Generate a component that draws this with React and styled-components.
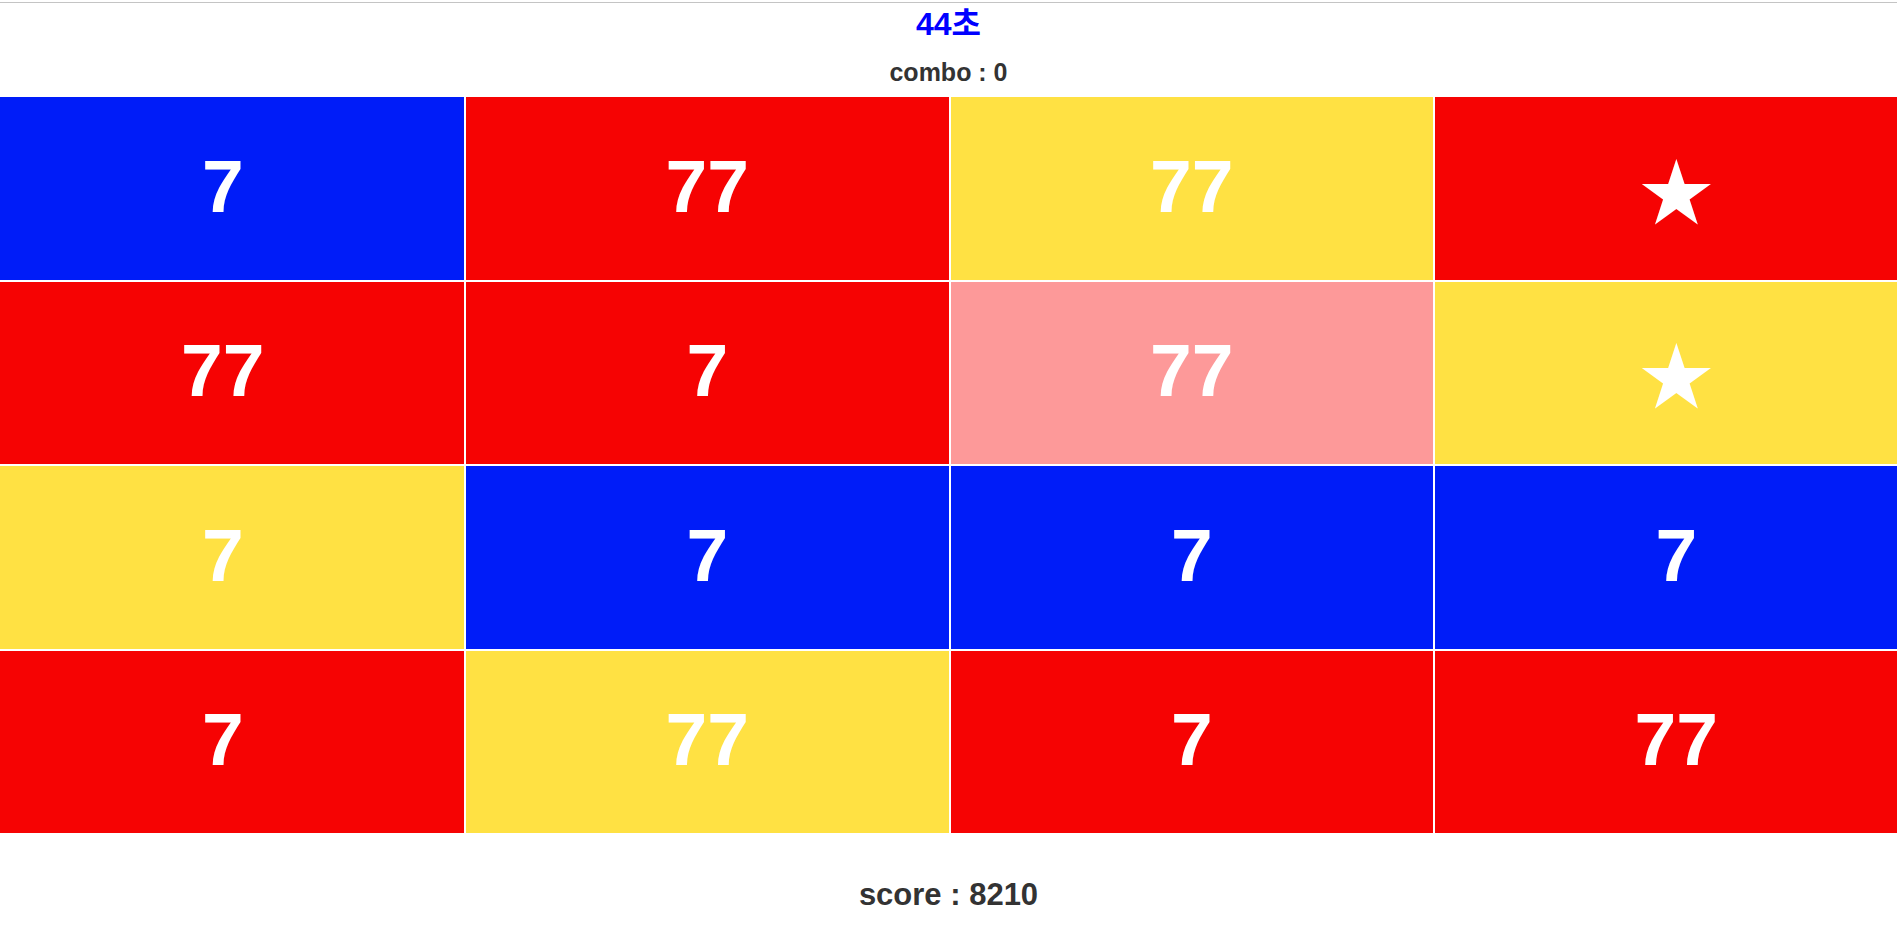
import React from "react";
import styled, { createGlobalStyle } from "styled-components";

const GlobalStyle = createGlobalStyle`
  html, body {
    margin: 0;
    padding: 0;
    background: #ffffff;
    overflow: hidden;
  }
  body {
    font-family: "Liberation Sans", Arial, "Noto Sans CJK KR", sans-serif;
  }
`;

const Page = styled.div`
  display: flex;
  flex-direction: column;
  align-items: stretch;
  width: 100%;
  min-height: 931px;
`;

const TopRule = styled.div`
  margin-top: 2px;
  height: 1px;
  background: #c4c4c4;
`;

const Timer = styled.div`
  margin-top: 3px;
  text-align: center;
  font-size: 32px;
  line-height: 36px;
  font-weight: 700;
  color: #0000ff;
`;

const Combo = styled.div`
  margin-top: 16px;
  text-align: center;
  font-size: 25px;
  line-height: 28px;
  font-weight: 700;
  color: #333333;
`;

const Board = styled.div`
  margin: 10px -21.5px 0 -19.5px;
  display: grid;
  grid-template-columns: repeat(4, 1fr);
  grid-auto-rows: 184.5px;
`;

const COLORS = {
  blue: "#001cf8",
  red: "#f60303",
  yellow: "#ffe143",
  pink: "#fd9999",
};

const Cell = styled.div`
  box-sizing: border-box;
  border: 1px solid #ffffff;
  padding-bottom: 5px;
  background: ${(p) => COLORS[p.$tone]};
  display: flex;
  align-items: center;
  justify-content: center;
  color: #ffffff;
  font-family: "Liberation Sans", Arial, sans-serif;
  font-weight: 700;
  font-size: 75px;
  line-height: 86px;
`;

const Star = styled.span`
  margin-top: 14px;
  font-family: "DejaVu Sans", sans-serif;
  font-weight: 400;
  font-size: 90px;
  line-height: 86px;
`;

const Score = styled.div`
  margin-top: 43px;
  text-align: center;
  font-size: 31px;
  line-height: 36px;
  font-weight: 700;
  color: #333333;
`;

const cells = [
  ["blue", "7"], ["red", "77"], ["yellow", "77"], ["red", "★"],
  ["red", "77"], ["red", "7"], ["pink", "77"], ["yellow", "★"],
  ["yellow", "7"], ["blue", "7"], ["blue", "7"], ["blue", "7"],
  ["red", "7"], ["yellow", "77"], ["red", "7"], ["red", "77"],
];

export default function App() {
  return (
    <>
      <GlobalStyle />
      <Page>
        <TopRule />
        <Timer>44초</Timer>
        <Combo>combo : 0</Combo>
        <Board>
          {cells.map(([tone, label], i) => (
            <Cell key={i} $tone={tone}>
              {label === "★" ? <Star>★</Star> : label}
            </Cell>
          ))}
        </Board>
        <Score>score : 8210</Score>
      </Page>
    </>
  );
}
